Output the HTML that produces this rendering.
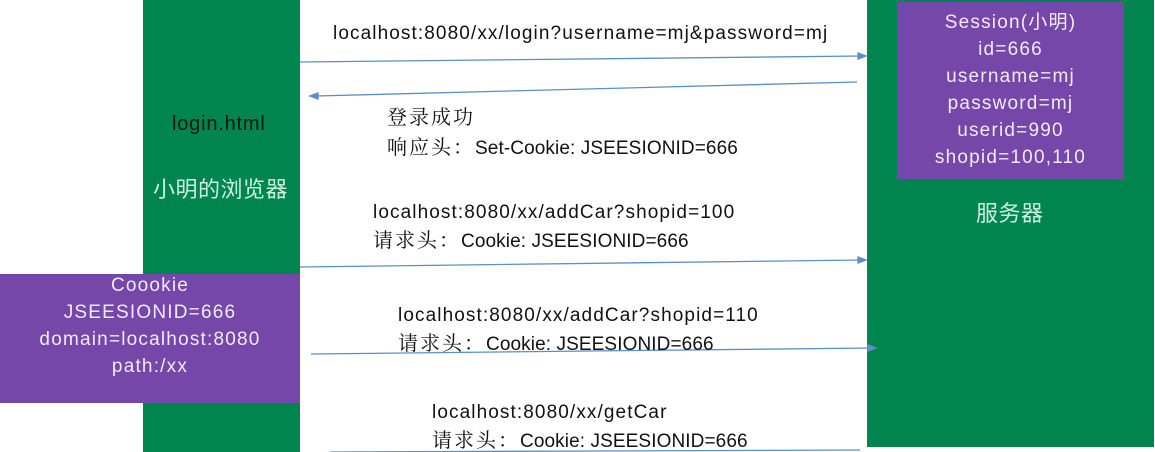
<!DOCTYPE html>
<html><head><meta charset="utf-8"><style>
body{margin:0;width:1155px;height:452px;background:#fff;position:relative;overflow:hidden;font-family:"Liberation Sans","Noto Serif CJK SC",sans-serif;}
.a{position:absolute}
.t{position:absolute;font-size:19px;letter-spacing:1.1px;color:#111;white-space:nowrap;line-height:20px}
.t span{font-size:20px;letter-spacing:2px}
.t b{font-weight:normal;letter-spacing:0.1px}
.c{font-family:"Liberation Sans","Noto Sans CJK SC",sans-serif}
.w{position:absolute;color:#f2eaff;font-size:19px;letter-spacing:1.2px;text-align:center;line-height:27px;font-family:"Liberation Sans","Noto Sans CJK SC",sans-serif}
</style></head><body>
<div class="a" style="left:143px;top:0;width:157px;height:452px;background:#00854f"></div>
<div class="a" style="left:867px;top:0;width:287px;height:447px;background:#00854f"></div>
<div class="a" style="left:897px;top:2px;width:227px;height:177px;background:#7447a9"></div>
<div class="a" style="left:0;top:274px;width:300px;height:129px;background:#7447a9"></div>
<svg class="a" style="left:0;top:0" width="1155" height="452">
<g stroke="#5b8fc9" stroke-width="1.3" fill="#5b8fc9">
<line x1="300" y1="62" x2="862" y2="56"/><polygon points="866,56 858,53 858,59"/>
<line x1="857" y1="82" x2="316" y2="96"/><polygon points="310,96 318,93 318,99"/>
<line x1="300" y1="267" x2="862" y2="260"/><polygon points="866,260 858,257 858,263"/>
<line x1="311" y1="354" x2="872" y2="348"/><polygon points="876,348 868,345 868,351"/>
<line x1="330" y1="452" x2="860" y2="450"/>
</g></svg>
<div class="t" style="left:333px;top:24px">localhost:8080/xx/login?username=mj&amp;password=mj</div>
<div class="t" style="left:387px;top:108px"><span>登录成功</span></div>
<div class="t" style="left:387px;top:138px"><span>响应头：</span><b>Set-Cookie: JSEESIONID=666</b></div>
<div class="t" style="left:373px;top:203px">localhost:8080/xx/addCar?shopid=100</div>
<div class="t" style="left:373px;top:231px"><span>请求头：</span><b>Cookie: JSEESIONID=666</b></div>
<div class="t" style="left:398px;top:306px">localhost:8080/xx/addCar?shopid=110</div>
<div class="t" style="left:398px;top:334px"><span>请求头：</span><b>Cookie: JSEESIONID=666</b></div>
<div class="t" style="left:432px;top:403px">localhost:8080/xx/getCar</div>
<div class="t" style="left:432px;top:431px"><span>请求头：</span><b>Cookie: JSEESIONID=666</b></div>
<div class="t c" style="left:172px;top:114px;color:#0a1a10;font-size:20px;letter-spacing:0.8px">login.html</div>
<div class="t c" style="left:153px;top:180px;font-size:22px;letter-spacing:0.5px;color:#c8f3dc">小明的浏览器</div>
<div class="t c" style="left:976px;top:204px;font-size:22px;letter-spacing:0.5px;color:#c8f3dc">服务器</div>
<div class="w" style="left:897px;top:9px;width:227px">Session(小明)<br>id=666<br>username=mj<br>password=mj<br>userid=990<br>shopid=100,110</div>
<div class="w" style="left:0;top:272px;width:300px">Coookie<br>JSEESIONID=666<br>domain=localhost:8080<br>path:/xx</div>
</body></html>
